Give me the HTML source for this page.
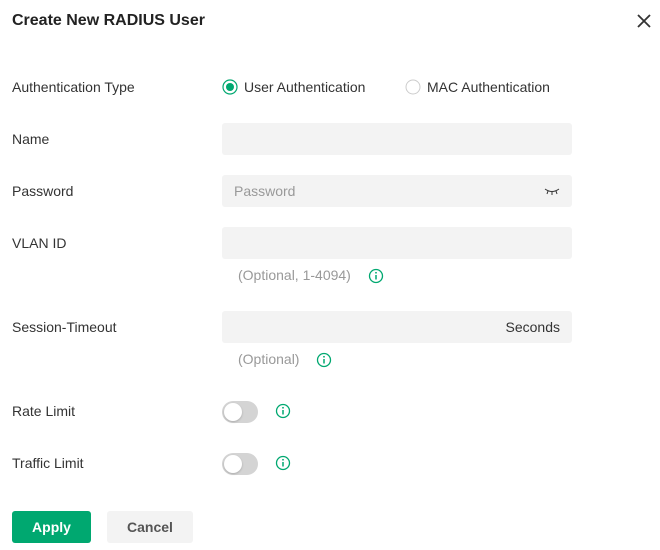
<!DOCTYPE html>
<html><head><style>
body{margin:0;width:660px;height:550px;background:#fff;font-family:"Liberation Sans",Arial,sans-serif;color:#333;position:relative;overflow:hidden}
.a{position:absolute}
.lbl{position:absolute;left:12px;font-size:14px;line-height:16px}
.inp{position:absolute;left:222px;width:350px;height:32px;background:#f3f3f3;border-radius:3px}
.help{position:absolute;font-size:14px;color:#999;line-height:16px}
.tog{position:absolute;left:222px;width:36px;height:22px;border-radius:11px;background:#d4d4d4}
.tog::after{content:"";position:absolute;left:2px;top:2px;width:18px;height:18px;border-radius:50%;background:#fff;box-shadow:0 1px 2px rgba(0,0,0,.2)}
</style></head><body>
<div class="a" style="left:12px;top:12px;font-size:16px;font-weight:bold;color:#222">Create New RADIUS User</div>
<svg class="a" style="left:636px;top:13px" width="16" height="16"><path d="M2 2L14 14M14 2L2 14" stroke="#333" stroke-width="1.8"/></svg>

<div class="lbl" style="top:79px">Authentication Type</div>
<svg class="a" style="left:222px;top:79px" width="16" height="16"><circle cx="8" cy="8" r="7" fill="none" stroke="#00a870" stroke-width="1.2"/><circle cx="8" cy="8" r="4" fill="#00a870"/></svg>
<div class="a" style="left:244px;top:79px;font-size:14px">User Authentication</div>
<svg class="a" style="left:405px;top:79px" width="16" height="16"><circle cx="8" cy="8" r="7" fill="none" stroke="#ccc" stroke-width="1"/></svg>
<div class="a" style="left:427px;top:79px;font-size:14px">MAC Authentication</div>

<div class="lbl" style="top:131px">Name</div>
<div class="inp" style="top:123px"></div>

<div class="lbl" style="top:183px">Password</div>
<div class="inp" style="top:175px"><span class="a" style="left:12px;top:8px;font-size:14px;color:#999">Password</span>
<svg class="a" style="left:322px;top:12px" width="16" height="8"><path d="M1 2Q8 7 15 2M4 4L3 7M8 5V8M12 4L13 7" stroke="#333" fill="none" stroke-width="1"/></svg></div>

<div class="lbl" style="top:235px">VLAN ID</div>
<div class="inp" style="top:227px"></div>
<div class="help" style="left:238px;top:267px">(Optional, 1-4094)</div>
<svg class="a" style="left:368px;top:268px" width="16" height="16"><circle cx="8" cy="8" r="6.5" fill="none" stroke="#00a870" stroke-width="1.3"/><path d="M8 7V11.5" stroke="#00a870" stroke-width="1.5"/><circle cx="8" cy="4.8" r="0.9" fill="#00a870"/></svg>

<div class="lbl" style="top:319px">Session-Timeout</div>
<div class="inp" style="top:311px"><span class="a" style="right:12px;top:8px;font-size:14px;color:#333">Seconds</span></div>
<div class="help" style="left:238px;top:351px">(Optional)</div>
<svg class="a" style="left:316px;top:352px" width="16" height="16"><circle cx="8" cy="8" r="6.5" fill="none" stroke="#00a870" stroke-width="1.3"/><path d="M8 7V11.5" stroke="#00a870" stroke-width="1.5"/><circle cx="8" cy="4.8" r="0.9" fill="#00a870"/></svg>

<div class="lbl" style="top:403px">Rate Limit</div>
<div class="tog" style="top:401px"></div>
<svg class="a" style="left:275px;top:403px" width="16" height="16"><circle cx="8" cy="8" r="6.5" fill="none" stroke="#00a870" stroke-width="1.3"/><path d="M8 7V11.5" stroke="#00a870" stroke-width="1.5"/><circle cx="8" cy="4.8" r="0.9" fill="#00a870"/></svg>

<div class="lbl" style="top:455px">Traffic Limit</div>
<div class="tog" style="top:453px"></div>
<svg class="a" style="left:275px;top:455px" width="16" height="16"><circle cx="8" cy="8" r="6.5" fill="none" stroke="#00a870" stroke-width="1.3"/><path d="M8 7V11.5" stroke="#00a870" stroke-width="1.5"/><circle cx="8" cy="4.8" r="0.9" fill="#00a870"/></svg>

<div class="a" style="left:12px;top:511px;width:79px;height:32px;background:#00a870;border-radius:3px;color:#fff;font-weight:bold;font-size:14px;text-align:center;line-height:32px">Apply</div>
<div class="a" style="left:107px;top:511px;width:86px;height:32px;background:#f3f3f3;border-radius:3px;color:#555;font-weight:bold;font-size:14px;text-align:center;line-height:32px">Cancel</div>
</body></html>
